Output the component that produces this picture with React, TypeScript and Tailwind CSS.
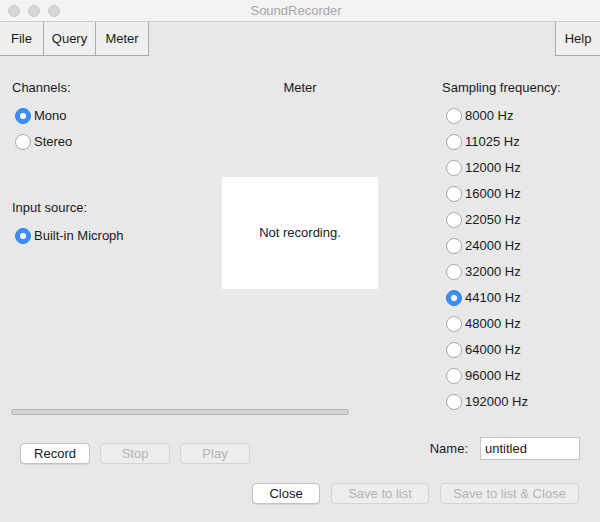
import React from "react";

const Radio = ({ label, checked }: { label: string; checked?: boolean }) => {
  return (
    <div className="flex items-center h-[26px] gap-[3px]">
      {checked ? (
        <span className="w-[16px] h-[16px] rounded-full bg-[#3d8ef7] border border-[#2f7fe8] flex items-center justify-center">
          <span className="w-[6px] h-[6px] rounded-full bg-white" />
        </span>
      ) : (
        <span className="w-[16px] h-[16px] rounded-full bg-white border border-[#a9a9a9]" />
      )}
      <span className="text-[13px] text-[#1a1a1a]">{label}</span>
    </div>
  );
};

const Btn = ({
  label,
  disabled,
  width,
}: {
  label: string;
  disabled?: boolean;
  width: string;
}) => {
  return (
    <div
      className={`${width} h-[21px] rounded-[4px] border flex items-center justify-center text-[13px] ${
        disabled
          ? "bg-[#ededed] border-[#d3d3d3] text-[#b3b3b3]"
          : "bg-white border-[#c2c2c2] text-[#1a1a1a] shadow-[0_0.5px_0.5px_rgba(0,0,0,0.15)]"
      }`}
    >
      {label}
    </div>
  );
};

const freqs = [
  "8000 Hz",
  "11025 Hz",
  "12000 Hz",
  "16000 Hz",
  "22050 Hz",
  "24000 Hz",
  "32000 Hz",
  "44100 Hz",
  "48000 Hz",
  "64000 Hz",
  "96000 Hz",
  "192000 Hz",
];

const App = () => {
  return (
    <div
      className="w-[600px] h-[522px] bg-[#e8e8e8] flex flex-col overflow-hidden"
      style={{ fontFamily: '"Liberation Sans", Arial, sans-serif' }}
    >
      {/* title bar */}
      <div className="h-[22px] shrink-0 bg-[#f3f3f3] border-b border-[#cdcdcd] flex items-center">
        <div className="flex gap-[8px] pl-[8px]">
          <span className="w-[12px] h-[12px] rounded-full bg-[#d6d6d6] border border-[#c9c9c9]" />
          <span className="w-[12px] h-[12px] rounded-full bg-[#d6d6d6] border border-[#c9c9c9]" />
          <span className="w-[12px] h-[12px] rounded-full bg-[#d6d6d6] border border-[#c9c9c9]" />
        </div>
        <div className="flex-1 text-center text-[13px] text-[#a6a6a6] pr-[68px]">
          SoundRecorder
        </div>
      </div>

      {/* tabs */}
      <div className="h-[34px] shrink-0 flex">
        <div className="flex">
          <div className="w-[44px] bg-[#efefef] border-r border-b border-[#ababab] flex items-center justify-center text-[13px] text-[#1a1a1a]">
            File
          </div>
          <div className="w-[52px] bg-[#efefef] border-r border-b border-[#ababab] flex items-center justify-center text-[13px] text-[#1a1a1a]">
            Query
          </div>
          <div className="w-[53px] bg-[#efefef] border-r border-b border-[#ababab] flex items-center justify-center text-[13px] text-[#1a1a1a]">
            Meter
          </div>
        </div>
        <div className="flex-1" />
        <div className="w-[45px] bg-[#efefef] border-l border-b border-[#ababab] flex items-center justify-center text-[13px] text-[#1a1a1a]">
          Help
        </div>
      </div>

      {/* body */}
      <div className="flex pt-[24px]">
        <div className="w-[442px] shrink-0 flex flex-col">
          <div className="flex h-[329px]">
            <div className="w-[222px] pl-[12px] flex flex-col">
              <div className="h-[16px] leading-[16px] text-[13px] text-[#1a1a1a]">Channels:</div>
              <div className="mt-[7px] pl-[3px]">
                <Radio label="Mono" checked />
                <Radio label="Stereo" />
              </div>
              <div className="mt-[45px] h-[16px] leading-[16px] text-[13px] text-[#1a1a1a]">
                Input source:
              </div>
              <div className="mt-[7px] pl-[3px]">
                <Radio label="Built-in Microph" checked />
              </div>
            </div>
            <div className="w-[156px] flex flex-col items-center">
              <div className="h-[16px] leading-[16px] text-[13px] text-[#1a1a1a]">Meter</div>
              <div className="mt-[81px] w-[156px] h-[112px] bg-white flex items-center justify-center text-[13px] text-[#1a1a1a]">
                Not recording.
              </div>
            </div>
          </div>
          <div className="ml-[11px] w-[338px] h-[6px] rounded-full bg-[#d4d4d4] border border-[#b7b7b7]" />
          <div className="flex gap-[10px] pl-[20px] mt-[28px]">
            <Btn label="Record" width="w-[70px]" />
            <Btn label="Stop" width="w-[70px]" disabled />
            <Btn label="Play" width="w-[70px]" disabled />
          </div>
        </div>
        <div className="flex-1 min-w-0 flex flex-col">
          <div className="h-[16px] leading-[16px] text-[13px] text-[#1a1a1a]">
            Sampling frequency:
          </div>
          <div className="mt-[7px] pl-[4px]">
            {freqs.map((f) => (
              <Radio key={f} label={f} checked={f === "44100 Hz"} />
            ))}
          </div>
          <div className="mt-[22px] -ml-[20px] flex items-center justify-end pr-[20px] gap-[12px]">
            <span className="text-[13px] text-[#1a1a1a]">Name:</span>
            <div className="w-[100px] shrink-0 h-[23px] bg-white border border-[#c4c4c4] flex items-center pl-[4px] text-[13px] text-[#1a1a1a]">
              untitled
            </div>
          </div>
        </div>
      </div>

      <div className="flex justify-end gap-[11px] pr-[21px] mt-[19px]">
        <Btn label="Close" width="w-[68px]" />
        <Btn label="Save to list" width="w-[98px]" disabled />
        <Btn label="Save to list & Close" width="w-[139px]" disabled />
      </div>
    </div>
  );
};

export default App;
